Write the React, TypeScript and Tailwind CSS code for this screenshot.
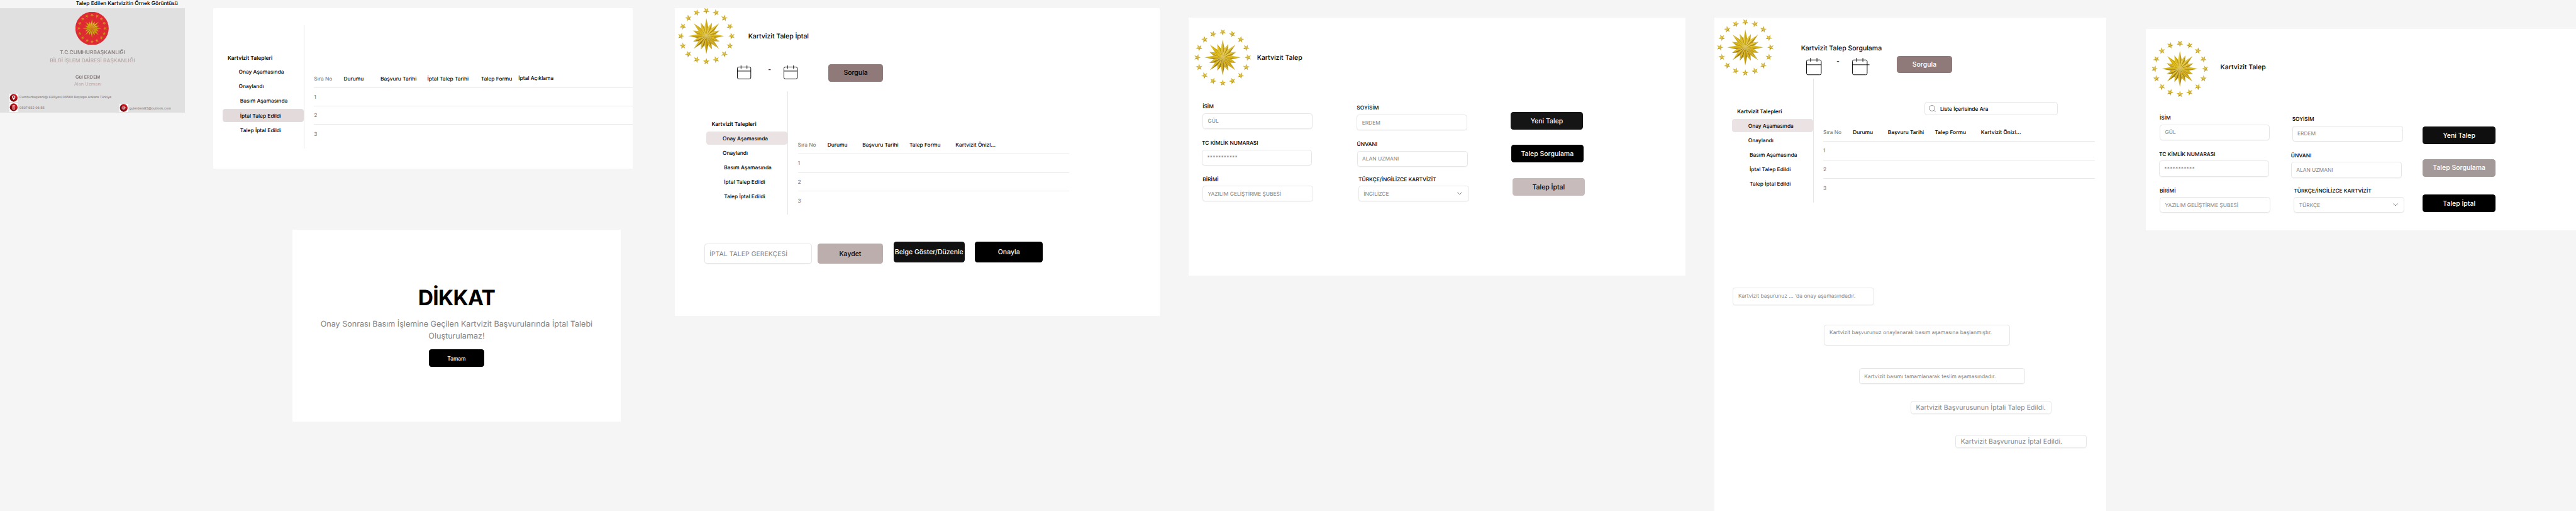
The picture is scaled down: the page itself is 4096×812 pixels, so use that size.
import type { ReactNode } from "react";

/* One spacing unit equals one design pixel at the canvas zoom level. */
const CANVAS =
  "relative h-[812px] w-[4096px] overflow-hidden bg-[#f5f5f5] text-black [--spacing:0.52453px] font-['Inter',sans-serif] [text-rendering:geometricPrecision] [font-optical-sizing:none] whitespace-nowrap";

const T16 = "text-[8.39px] leading-24";
const T20 = "text-[10.49px] leading-30";

/* ---------- Emblem ---------- */

type Facet = { d: string; fill: string };

function shade(level: number) {
  const stops = [
    [160, 124, 24],
    [190, 152, 22],
    [216, 180, 12],
    [229, 200, 50],
  ];
  const t = Math.max(0, Math.min(0.999, level)) * (stops.length - 1);
  const i = Math.floor(t);
  const f = t - i;
  const c = stops[i].map((v, k) => Math.round(v + (stops[i + 1][k] - v) * f));
  return `rgb(${c.join(",")})`;
}

function rays(cx: number, cy: number, count: number, outer: (i: number) => number, inner: number, turn: number) {
  const out: Facet[] = [];
  const step = (Math.PI * 2) / count;
  const at = (a: number, r: number) => `${(cx + Math.sin(a) * r).toFixed(2)} ${(cy - Math.cos(a) * r).toFixed(2)}`;
  for (let i = 0; i < count; i++) {
    const a = turn + i * step;
    for (const side of [-1, 1]) {
      const facing = a + (side * Math.PI) / 2;
      const light = Math.cos(facing + 0.9) * 0.42 + Math.cos(a - 0.35) * 0.15 + 0.52;
      out.push({
        d: `M${cx} ${cy}L${at(a, outer(i))}L${at(a + (side * step) / 2, inner)}Z`,
        fill: shade(light),
      });
    }
  }
  return out;
}

const SUN = rays(0, 0, 16, (i) => (i % 2 === 0 ? 54.5 : 43.8), 28, 0);
const STARS = Array.from({ length: 16 }, (_, i) => {
  const a = (i * Math.PI) / 8;
  return rays(Math.sin(a) * 77, -Math.cos(a) * 77, 5, () => 10.5, 4.2, a + Math.PI);
}).flat();

function Emblem({ className, seal = false }: { className: string; seal?: boolean }) {
  return (
    <svg className={`shrink-0 ${className}`} viewBox={seal ? "-95.8 -95.8 191.6 191.6" : "-86 -84.5 172 169"}>
      {seal && <circle r="96.8" fill="#de2b33" />}
      {[...SUN, ...STARS].map((f, i) => (
        <path key={i} d={f.d} fill={f.fill} />
      ))}
    </svg>
  );
}

/* ---------- Small parts ---------- */

function Calendar({ className = "", wide = false, overshoot = false }: { className?: string; wide?: boolean; overshoot?: boolean }) {
  const w = wide ? 46.6 : 42.5;
  const h = wide ? 52 : 41.7;
  const top = wide ? 6.2 : 4.7;
  const line = wide ? 20.7 : 17;
  const t1 = wide ? 13 : 12;
  const t2 = wide ? 32.6 : 30;
  return (
    <svg
      className={`shrink-0 overflow-visible ${wide ? "h-52 w-46.5" : "h-41.75 w-42.5"} ${className}`}
      viewBox={`0 0 ${w} ${h}`}
      fill="none"
      stroke="#000"
      strokeWidth="1.8"
    >
      <rect x="0.9" y={top} width={w - 1.8} height={h - top - 0.9} rx="4.5" />
      <path d={`M1 ${line}H${overshoot ? 52.8 : w - 1}M${t1} 0V${wide ? 11.5 : 10}M${t2} 0V${wide ? 11.5 : 10}`} />
    </svg>
  );
}

function Button({ className, children }: { className: string; children: ReactNode }) {
  return (
    <button type="button" className={`flex shrink-0 items-center justify-center rounded-[4.2px] font-medium ${className}`}>
      {children}
    </button>
  );
}

function Artboard({ className, children }: { className: string; children: ReactNode }) {
  return <section className={`absolute overflow-hidden bg-white ${className}`}>{children}</section>;
}

function Sidebar({ active, tone }: { active: number; tone: string }) {
  const items = ["Onay Aşamasında", "Onaylandı", "Basım Aşamasında", "İptal Talep Edildi", "Talep İptal Edildi"];
  return (
    <nav className="h-374 w-248.5 shrink-0 border-r border-[#e6e6e6] pt-89">
      <h3 className={`ml-16 font-semibold ${T16}`}>Kartvizit Talepleri</h3>
      <ul className="mt-9 flex flex-col gap-4">
        {items.map((label, i) => (
          <li
            key={label}
            className={`flex h-40 items-center rounded-[4.2px] pt-5 font-medium ${T16} ${i < 2 ? "pl-49.5" : "pl-54"} ${i === active ? tone : ""}`}
          >
            {label}
          </li>
        ))}
      </ul>
    </nav>
  );
}

function Table({ className, cols, heads }: { className: string; cols: string; heads: ReactNode[] }) {
  return (
    <div className={`${T16} ${className}`}>
      <div className={`grid h-56 items-center border-b border-[#e8e8e8] pt-5 font-medium ${cols}`}>
        <span className="text-[#828282]">Sıra No</span>
        {heads.map((h, i) => (
          <span key={i}>{h}</span>
        ))}
      </div>
      {[1, 2, 3].map((n) => (
        <div key={n} className={`flex h-56 items-center pt-5 font-medium text-[#828282] ${n < 3 ? "border-b border-[#e8e8e8]" : ""}`}>
          {n}
        </div>
      ))}
    </div>
  );
}

const REQUEST_COLS = "grid-cols-[47.2px_55.6px_74.6px_73.3px_1fr]";
const REQUEST_HEADS = ["Durumu", "Başvuru Tarihi", "Talep Formu", "Kartvizit Önizl..."];

function Field({ label, value, className = "", box = "h-48 w-334", select = false }: { label: string; value: string; className?: string; box?: string; select?: boolean }) {
  return (
    <label className={`flex flex-col gap-5.5 pt-2.5 ${T16} ${className}`}>
      <span className="font-medium">{label}</span>
      <span
        className={`flex items-center justify-between rounded-[4.2px] border border-[#e6e6e6] pt-5 pr-18 pl-14 text-[#828282] shadow-[0_1px_1px_rgba(0,0,0,0.04)] ${box}`}
      >
        {value}
        {select && (
          <svg className="mb-5 h-9 w-15.5" viewBox="0 0 15.5 9" fill="none" stroke="#828282" strokeWidth="1.9">
            <path d="M1 1L7.75 7.6L14.5 1" />
          </svg>
        )}
      </span>
    </label>
  );
}

function Note({ className, children }: { className: string; children: ReactNode }) {
  return (
    <p className={`rounded-[4.2px] border border-[#e6e6e6] pl-14.5 text-[#828282] shadow-[0_1px_1px_rgba(0,0,0,0.04)] ${className}`}>
      {children}
    </p>
  );
}

/* ---------- Business card preview ---------- */

function Badge({ id, className = "", children }: { id: string; className?: string; children: ReactNode }) {
  return (
    <svg className={`h-25 w-25.5 shrink-0 bg-white ${className}`} viewBox="0 0 25.5 25">
      <defs>
        <linearGradient id={id} x1="1" y1="0" x2="0.1" y2="0.9">
          <stop offset="0" stopColor="#e8222a" />
          <stop offset="0.5" stopColor="#a80f17" />
          <stop offset="1" stopColor="#5c0508" />
        </linearGradient>
      </defs>
      <circle cx="12.9" cy="12.4" r="11.7" fill={`url(#${id})`} />
      {children}
    </svg>
  );
}

function BusinessCard() {
  const fade = "bg-linear-to-b bg-clip-text text-transparent";
  const contact = "flex items-start pl-28.25 text-[5.245px] leading-15 font-medium text-[#8f8080]";
  return (
    <>
      <h2 className={`absolute -top-0.5 left-230 font-medium ${T16}`}>Talep Edilen Kartvizitin Örnek Görüntüsü</h2>
      <section className="absolute top-25 left-0 flex h-316 w-560 flex-col bg-[#e0e0e0] pt-11">
        <Emblem seal className="ml-229 h-100 w-100.5" />
        <div className={`mt-13.5 text-center font-medium ${T16}`}>
          <p className={`${fade} from-[#6b6060] to-[#a09294]`}>T.C.CUMHURBAŞKANLIĞI</p>
          <p className={`${fade} from-[#a39595] to-[#ccb4b4]`}>BİLGİ İŞLEM DAİRESİ BAŞKANLIĞI</p>
        </div>
        <div className="mt-25 w-532.5 text-center text-[7.34px] leading-21 font-medium">
          <p className={`${fade} from-[#574c4c] to-[#857878]`}>Gül ERDEM</p>
          <p className={`${fade} from-[#b09c9c] to-[#d4baba]`}>Alan Uzmanı</p>
        </div>
        <div className={`mt-20 ${contact}`}>
          <Badge id="badge-pin">
            <path d="M12.9 5.2a5 5 0 0 0-5 5c0 3.4 5 8.6 5 8.6s5-5.2 5-8.6a5 5 0 0 0-5-5Zm0 7.5a2.5 2.5 0 1 1 0-5 2.5 2.5 0 0 1 0 5Z" fill="#fff" />
          </Badge>
          <p className="mt-5.5 ml-5">Cumhurbaşkanlığı Külliyesi 06560 Beştepe Ankara Türkiye</p>
        </div>
        <div className={`mt-4 ${contact}`}>
          <Badge id="badge-phone">
            <rect x="9.6" y="6.6" width="6.8" height="11.8" rx="0.8" fill="none" stroke="#fff" strokeWidth="1.4" />
            <path d="M12.6 8.5v5M12.2 16.2h1.6" stroke="#fff" strokeWidth="1.2" />
          </Badge>
          <p className="mt-8.5 ml-5 w-304">0507 652 06 85</p>
          <Badge id="badge-mail" className="mt-1">
            <g fill="none" stroke="#fff" strokeWidth="1.3">
              <circle cx="12.6" cy="12.3" r="2.2" />
              <path d="M14.8 9.8v3.2c0 2 2.7 1.8 2.7-.9a4.9 4.9 0 1 0-2.3 4.3" />
            </g>
          </Badge>
          <p className="mt-10.5 ml-3.5">gulerdem85@outlook.com</p>
        </div>
      </section>
    </>
  );
}

/* ---------- Screens ---------- */

function CancelList() {
  return (
    <Artboard className="top-25 left-647 flex h-486 w-1271 pt-51 pl-27">
      <Sidebar active={3} tone="bg-[#e3dbdb]" />
      <Table
        className="mt-134.5 ml-29.5 grow"
        cols="grid-cols-[47.1px_58.6px_74.5px_85.2px_59.6px_1fr]"
        heads={["Durumu", "Başvuru Tarihi", "İptal Talep Tarihi", "Talep Formu", <span className="mb-4 block">İptal Açıklama</span>]}
      />
    </Artboard>
  );
}

function Warning() {
  return (
    <Artboard className="top-695 left-886 flex h-583 w-996 flex-col items-center pt-167.75 text-center">
      <h1 className="text-[33.57px] leading-80 font-bold tracking-[-0.02em]">DİKKAT</h1>
      <p className="mt-24 text-[12.59px] leading-36 text-[#828282]">
        Onay Sonrası Basım İşlemine Geçilen Kartvizit Başvurularında İptal Talebi
        <br />
        Oluşturulamaz!
      </p>
      <Button className={`mt-20.25 h-52 w-168.5 bg-black pt-5 text-white ${T16}`}>Tamam</Button>
    </Artboard>
  );
}

function CancelRequest() {
  return (
    <Artboard className="top-25 left-2046 h-933 w-1470">
      <header className="flex h-169 items-start pl-9">
        <Emblem className="h-169 w-172" />
        <h2 className={`mt-70.75 ml-41 font-medium ${T20}`}>Kartvizit Talep İptal</h2>
      </header>
      <div className={`flex items-start pl-189 font-medium ${T20}`}>
        <Calendar className="mt-5" />
        <span className="mt-3.25 ml-51 w-47">-</span>
        <Calendar className="mt-5" />
        <Button className="ml-92.5 h-53 w-167 bg-[#8f7a79] pt-2.5 text-black">Sorgula</Button>
      </div>
      <div className="mt-30 flex pl-95">
        <Sidebar active={0} tone="bg-[#eae2e3]" />
        <Table className="mt-134.5 ml-29 w-823" cols={REQUEST_COLS} heads={REQUEST_HEADS} />
      </div>
      <div className={`mt-82 flex items-start pl-88.5 ${T20}`}>
        <Note className="mt-4 h-62 w-327 pt-15.75">İPTAL TALEP GEREKÇESİ</Note>
        <Button className="mt-4 ml-16.5 h-62 w-199 bg-[#bcaead] pt-2.5 text-black">Kaydet</Button>
        <Button className="ml-32 h-62 w-215 bg-[#111] pt-2.5 text-white">Belge Göster/Düzenle</Button>
        <Button className="ml-32 h-62 w-205 bg-black pt-2.5 text-white">Onayla</Button>
      </div>
    </Artboard>
  );
}

function RequestForm() {
  return (
    <Artboard className="top-54 left-3603 h-781 w-1507">
      <header className="flex h-257 items-start pt-36 pl-17">
        <Emblem className="h-169 w-172" />
        <h2 className={`mt-70.75 ml-18.5 font-medium ${T20}`}>Kartvizit Talep</h2>
      </header>
      <div className="flex items-start pl-42.5">
        <div className="flex w-335 flex-col gap-30">
          <Field label="İSİM" value="GÜL" />
          <Field className="-ml-2" label="TC KİMLİK NUMARASI" value="***********" box="h-48 w-334 tracking-[0.025em]" />
          <Field label="BİRİMİ" value="YAZILIM GELİŞTİRME ŞUBESİ" box="h-48 w-335" />
        </div>
        <div className="mt-3.5 ml-132.5 flex w-341 flex-col">
          <Field label="SOYİSİM" value="ERDEM" box="h-49 w-335.5" />
          <Field className="mt-29.5 ml-0.5" label="ÜNVANI" value="ALAN UZMANI" box="h-48 w-335.5" />
          <Field className="mt-26 ml-5" label="TÜRKÇE/İNGİLİZCE KARTVİZİT" value="İNGİLİZCE" box="h-48 w-335.5" select />
        </div>
        <div className={`mt-29 ml-125 flex flex-col ${T20}`}>
          <Button className="h-53 w-220 bg-[#151515] pt-2.5 text-[#fff5f5]">Yeni Talep</Button>
          <Button className="mt-46 ml-1.5 h-53 w-220 bg-black pt-2.5 text-white">Talep Sorgulama</Button>
          <Button className="mt-48 ml-5.5 h-53 w-220 bg-[#c8bbbb] pt-2.5 text-black">Talep İptal</Button>
        </div>
      </div>
    </Artboard>
  );
}

function QueryScreen() {
  return (
    <Artboard className="top-54 left-5197 h-1495 w-1188">
      <header className="flex h-185 items-start pl-7.5">
        <Emblem className="mt-6 h-169 w-172" />
        <div className={`mt-77.25 ml-83 font-medium ${T20}`}>
          <h2>Kartvizit Talep Sorgulama</h2>
          <div className="mt-7.75 flex items-start pl-15.5">
            <Calendar wide className="mt-6" />
            <span className="mt-3.25 ml-45.5 w-48">-</span>
            <Calendar wide overshoot className="mt-6" />
            <Button className="ml-89 h-53 w-166.5 bg-[#8f7a79] pt-2.5 text-white">Sorgula</Button>
          </div>
        </div>
      </header>
      <div className="flex pl-53">
        <Sidebar active={0} tone="bg-[#eae2e3]" />
        <div className="ml-28.5 w-823 pt-70">
          <div className={`ml-307 flex h-40 w-405 items-center rounded-[4.2px] border border-[#e6e6e6] pl-12 font-medium ${T16}`}>
            <svg className="h-21 w-20.5" viewBox="0 0 20.5 21" fill="none" stroke="#828282" strokeWidth="1.7">
              <circle cx="9.5" cy="9.5" r="8.5" />
              <path d="M15 15.5L20 20.5" />
            </svg>
            <span className="mt-5 ml-13">Liste İçerisinde Ara</span>
          </div>
          <Table className="mt-24.5" cols={REQUEST_COLS} heads={REQUEST_HEADS} />
        </div>
      </div>
      <div className={`mt-258 flex flex-col items-start tracking-[0.007em] ${T16}`}>
        <Note className="ml-56 h-54.5 w-427.5 pt-13">Kartvizit başurunuz ... ‘da onay aşamasındadır.</Note>
        <Note className="mt-57.5 ml-332.5 h-63 w-564 pt-13">Kartvizit başvurunuz onaylanarak basım aşamasına başlanmıştır.</Note>
        <Note className="mt-69 ml-438 h-48 w-503.5 pt-13">Kartvizit basımı tamamlanarak teslim aşamasındadır.</Note>
        <Note className={`mt-52 ml-594.5 h-40 w-428 pt-4.25 ${T20}`}>Kartvizit Başvurusunun İptali Talep Edildi.</Note>
        <Note className={`mt-63 ml-730.5 h-40 w-398.5 pt-4.25 ${T20}`}>Kartvizit Başvurunuz İptal Edildi.</Note>
      </div>
    </Artboard>
  );
}

function RequestFormTurkish() {
  return (
    <Artboard className="top-88 left-6505 h-610 w-1310">
      <header className="flex h-257 items-start pt-36 pl-17">
        <Emblem className="h-169 w-172" />
        <h2 className={`mt-64.75 ml-37 font-medium ${T20}`}>Kartvizit Talep</h2>
      </header>
      <div className="flex items-start pl-42">
        <div className="flex w-335.5 flex-col gap-30">
          <Field label="İSİM" value="GÜL" />
          <Field className="-ml-2" label="TC KİMLİK NUMARASI" value="***********" box="h-48 w-334 tracking-[0.025em]" />
          <Field label="BİRİMİ" value="YAZILIM GELİŞTİRME ŞUBESİ" box="h-48 w-335.5" />
        </div>
        <div className="mt-3.5 ml-62.5 flex w-344 flex-col">
          <Field className="ml-3.5" label="SOYİSİM" value="ERDEM" box="h-49 w-335.5" />
          <Field className="mt-29.5" label="ÜNVANI" value="ALAN UZMANI" box="h-48 w-335.5" />
          <Field className="mt-26 ml-8.5" label="TÜRKÇE/İNGİLİZCE KARTVİZİT" value="TÜRKÇE" box="h-48 w-335.5" select />
        </div>
        <div className={`mt-38 ml-55.5 flex flex-col ${T20}`}>
          <Button className="h-53 w-220.5 bg-[#0f0f0f] pt-2.5 text-white">Yeni Talep</Button>
          <Button className="mt-46 h-53 w-220.5 bg-[#a39998] pt-2.5 text-white">Talep Sorgulama</Button>
          <Button className="mt-54.5 h-53 w-220.5 bg-black pt-2.5 text-white">Talep İptal</Button>
        </div>
      </div>
    </Artboard>
  );
}

export default function App() {
  return (
    <main className={CANVAS}>
      <BusinessCard />
      <CancelList />
      <Warning />
      <CancelRequest />
      <RequestForm />
      <QueryScreen />
      <RequestFormTurkish />
    </main>
  );
}
